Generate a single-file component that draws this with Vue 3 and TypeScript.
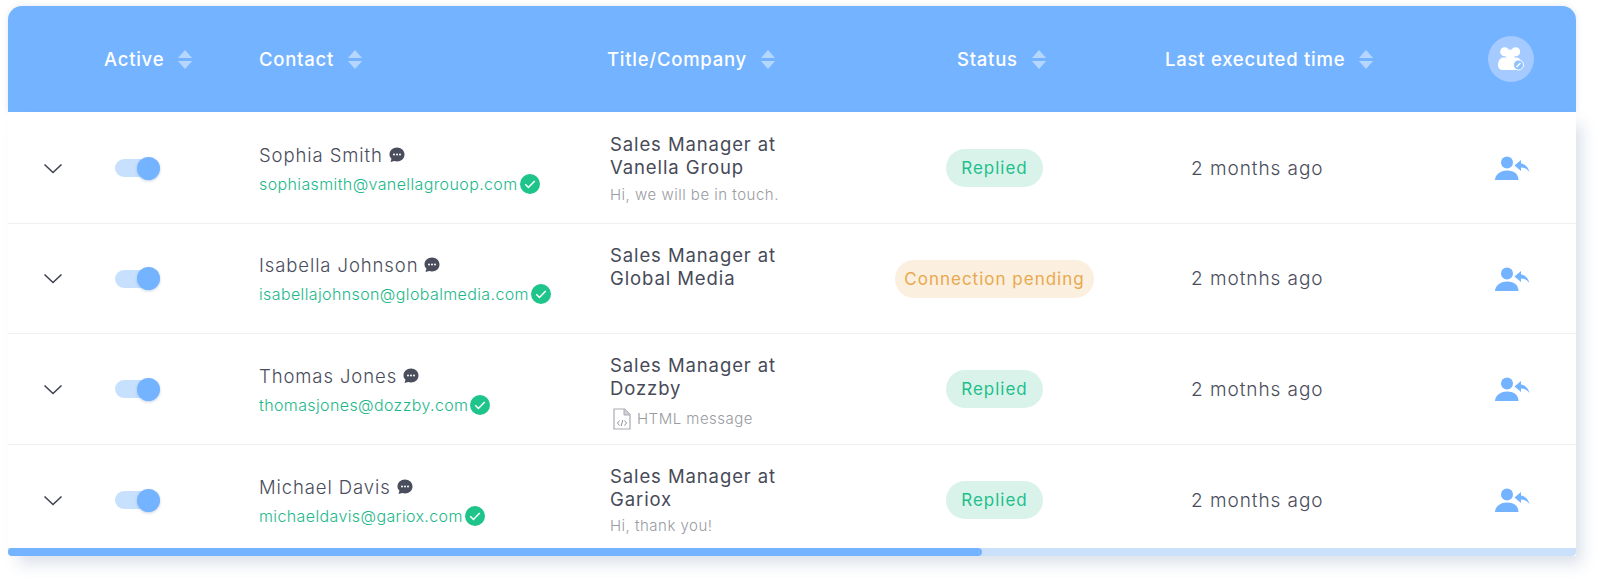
<template>
  <div class="page">
    <div class="card">
      <div class="head grid-row">
        <div></div>
        <div class="th">Active <svg class="sort" viewBox="0 0 16 20"><path d="M8 0l7.500 8.400H.5z" fill="#b5d6ff" /><path d="M8 20l7.500-8.400H.5z" fill="#b5d6ff" /></svg></div>
        <div class="th">Contact <svg class="sort" viewBox="0 0 16 20"><path d="M8 0l7.500 8.400H.5z" fill="#b5d6ff" /><path d="M8 20l7.500-8.400H.5z" fill="#b5d6ff" /></svg></div>
        <div class="th th-title">Title/Company <svg class="sort" viewBox="0 0 16 20"><path d="M8 0l7.500 8.400H.5z" fill="#b5d6ff" /><path d="M8 20l7.500-8.400H.5z" fill="#b5d6ff" /></svg></div>
        <div class="th th-status">Status <svg class="sort" viewBox="0 0 16 20"><path d="M8 0l7.500 8.400H.5z" fill="#b5d6ff" /><path d="M8 20l7.500-8.400H.5z" fill="#b5d6ff" /></svg></div>
        <div class="th th-time">Last executed time <svg class="sort" viewBox="0 0 16 20"><path d="M8 0l7.500 8.400H.5z" fill="#b5d6ff" /><path d="M8 20l7.500-8.400H.5z" fill="#b5d6ff" /></svg></div>
        <div class="th-action">
          <span class="group-circle">
            <svg viewBox="0 0 26 24">
              <circle cx="6.700" cy="4.700" r="4.500" fill="#fff" />
              <circle cx="17.700" cy="4.700" r="4.500" fill="#fff" />
              <circle cx="12.200" cy="7.500" r="5" fill="#fff" />
              <path d="M0 18c0-4 2-7 5-7.500h14c2.500 .5 5 3 5 7 0 3-2 5.500-5 5.500H5c-3 0-5-2-5-5z" fill="#fff" />
              <circle cx="20.500" cy="18" r="5" fill="#8fc0ff" stroke="#fff" stroke-width="1" />
              <path d="M18.500 20l4-4" stroke="#fff" stroke-width="1.500" />
            </svg>
          </span>
        </div>
      </div>

      <div class="body">
        <div v-for="row in rows" :key="row.name" class="row grid-row">
          <div class="cell-chevron">
            <svg width="20" height="11" viewBox="0 0 20 11"><path d="M1.500 1.500L10 9.500l8.500-8" fill="none" stroke="#3f4350" stroke-width="1.600" /></svg>
          </div>
          <div class="cell-toggle">
            <span class="toggle"><span class="knob"></span></span>
          </div>
          <div class="contact">
            <div class="name">
              {{ row.name }}
              <svg class="chat" width="16" height="16" viewBox="0 0 16 16">
                <path d="M8 .5c4.300 0 7.500 3 7.500 7s-3.200 7-7.500 7c-1 0-2-.2-2.900-.5L1.500 15l1-3.200C1.200 10.600.5 9.100.5 7.500c0-4 3.200-7 7.500-7z" fill="#4a4d5c" />
                <circle cx="5" cy="7.500" r="1" fill="#fff" /><circle cx="8" cy="7.500" r="1" fill="#fff" /><circle cx="11" cy="7.500" r="1" fill="#fff" />
              </svg>
            </div>
            <div class="email">
              {{ row.email }}
              <svg class="check" width="20" height="20" viewBox="0 0 19 19">
                <circle cx="9.500" cy="9.500" r="9.500" fill="#1fc48a" />
                <path d="M5 9.800l3 3 6-6.200" fill="none" stroke="#fff" stroke-width="1.500" />
              </svg>
            </div>
          </div>
          <div class="title">
            <div class="title-text">Sales Manager at<br />{{ row.company }}</div>
            <div v-if="row.note" class="note">{{ row.note }}</div>
            <div v-if="row.html" class="note note-html">
              <svg width="18" height="22" viewBox="0 0 18 22">
                <path d="M1 1h10.500L17 6.500V21H1z" fill="none" stroke="#a9abb3" stroke-width="1.200" />
                <path d="M11 1v6h6" fill="#d0d1d6" stroke="#a9abb3" stroke-width="1" />
                <path d="M6.500 12.500L4.500 15l2 2.500M11.500 12.500l2 2.500-2 2.500M9.800 12l-1.600 6" fill="none" stroke="#8d8f98" stroke-width="1" />
              </svg>
              HTML message
            </div>
          </div>
          <div class="cell-status">
            <span class="badge" :class="row.pending ? 'badge-pending' : 'badge-replied'">{{ row.status }}</span>
          </div>
          <div class="time">{{ row.time }}</div>
          <div class="cell-action">
            <svg width="35" height="24" viewBox="0 0 35 24">
              <circle cx="12" cy="6.500" r="6" fill="#74b3ff" />
              <path d="M0 24c0-5 5-9.500 12-9.500 4 0 7 1 9 3 1 1 2.500 3.500 2.500 6.500z" fill="#74b3ff" />
              <path d="M34.500 16c-2-3-5.500-4.500-8.500-4.500V15L19.500 9.500 26 4v3.500c4 .5 7.500 4 8.500 8.500z" fill="#74b3ff" />
            </svg>
          </div>
        </div>
        <div class="scrollbar"><div class="thumb"></div></div>
      </div>
    </div>
  </div>
</template>

<script setup lang="ts">
interface Row {
  name: string;
  email: string;
  company: string;
  note?: string;
  html?: boolean;
  status: string;
  pending?: boolean;
  time: string;
}

const rows: Row[] = [
  { name: "Sophia Smith", email: "sophiasmith@vanellagrouop.com", company: "Vanella Group", note: "Hi, we will be in touch.", status: "Replied", time: "2 months ago" },
  { name: "Isabella Johnson", email: "isabellajohnson@globalmedia.com", company: "Global Media", status: "Connection pending", pending: true, time: "2 motnhs ago" },
  { name: "Thomas Jones", email: "thomasjones@dozzby.com", company: "Dozzby", html: true, status: "Replied", time: "2 motnhs ago" },
  { name: "Michael Davis", email: "michaeldavis@gariox.com", company: "Gariox", note: "Hi, thank you!", status: "Replied", time: "2 months ago" }
];
</script>

<style>
html,
body {
  background: #fff;
  overflow: hidden;
}
</style>

<style scoped>
.page {
  padding: 6px 24px 0 8px;
  height: 573px;
  font-family: Inter, "Open Sans", sans-serif;
  color: #4a4d5c;
}

.card {
  width: 1568px;
}

.grid-row {
  display: grid;
  grid-template-columns: 96px 155px 351px 253px 270px 1fr 136px;
  align-items: center;
}

.head {
  height: 106px;
  background: #74b3ff;
  border-radius: 14px 14px 0 0;
  box-shadow: 0 0 6px rgba(90, 110, 140, 0.16);
  position: relative;
}

.th {
  display: flex;
  align-items: center;
  gap: 13px;
  color: #fff;
  font-size: 18.500px;
  font-weight: 500;
  letter-spacing: 0.75px;
  white-space: nowrap;
}

.th-title {
  margin-left: -3px;
}

.th-status {
  padding-left: 94px;
}

.th-time {
  padding-left: 32px;
}

.sort {
  width: 16px;
  height: 19px;
  flex: none;
}

.th-action {
  display: flex;
  justify-content: flex-end;
  padding-right: 42px;
}

.group-circle {
  width: 46px;
  height: 46px;
  border-radius: 50%;
  background: #a4caff;
  display: flex;
  align-items: center;
  justify-content: center;
}

.group-circle svg {
  width: 26px;
  height: 24px;
}

.body {
  background: #fff;
  padding-top: 1px;
  box-shadow: 8px 10px 14px -2px rgba(80, 110, 150, 0.2);
  position: relative;
}

.row {
  box-sizing: border-box;
  height: 110.500px;
  padding-top: 1px;
  border-bottom: 1.500px solid #eeeff1;
}

.row:nth-child(4) {
  border-bottom: 0;
}

.cell-chevron {
  padding-left: 35px;
  display: flex;
}

.cell-toggle {
  display: flex;
  padding-left: 11px;
}

.toggle {
  width: 45px;
  height: 18px;
  border-radius: 9px;
  background: #c7e0fd;
  position: relative;
}

.knob {
  position: absolute;
  right: 0;
  top: -2.500px;
  width: 23px;
  height: 23px;
  border-radius: 50%;
  background: #74b3ff;
  box-shadow: 0 1px 3px rgba(70, 110, 170, 0.3);
}

.contact {
  display: flex;
  flex-direction: column;
  gap: 8px;
}

.name {
  display: flex;
  align-items: center;
  gap: 6px;
  margin-top: 1px;
  font-size: 18.500px;
  font-weight: 300;
  letter-spacing: 0.9px;
  line-height: 22px;
}

.email {
  display: flex;
  align-items: center;
  gap: 2px;
  font-size: 16px;
  font-weight: 300;
  letter-spacing: 0.38px;
  color: #1db88a;
  line-height: 20px;
}

.title {
  align-self: start;
  padding-top: 19px;
}

.title-text {
  font-size: 18.500px;
  font-weight: 400;
  letter-spacing: 0.9px;
  line-height: 23px;
  color: #474a58;
}

.note {
  font-size: 15px;
  font-weight: 300;
  letter-spacing: 0.5px;
  color: #999ba2;
  margin-top: 5.500px;
  line-height: 20px;
}

.note-html {
  display: flex;
  align-items: center;
  gap: 6px;
  margin-top: 7.500px;
  margin-left: 3px;
}

.cell-status {
  display: flex;
  justify-content: center;
  padding-right: 7px;
}

.badge {
  height: 38px;
  display: flex;
  align-items: center;
  padding: 0 15.500px;
  border-radius: 19px;
  font-size: 17px;
  letter-spacing: 1px;
}

.badge-replied {
  background: #d9f3ea;
  color: #1fbf8c;
}

.badge-pending {
  background: #fbefdf;
  color: #e8a94e;
  padding: 0 9px;
}

.time {
  padding-left: 58px;
  font-size: 19px;
  font-weight: 300;
  letter-spacing: 0.95px;
  white-space: nowrap;
}

.cell-action {
  display: flex;
  justify-content: flex-end;
  padding-right: 46px;
}

.scrollbar {
  position: relative;
  height: 8px;
  margin-top: -7px;
  background: #cbe1fb;
  border-radius: 0 0 4px 4px;
}

.thumb {
  width: 974px;
  height: 100%;
  background: #74b3ff;
  border-radius: 4px;
}
</style>
